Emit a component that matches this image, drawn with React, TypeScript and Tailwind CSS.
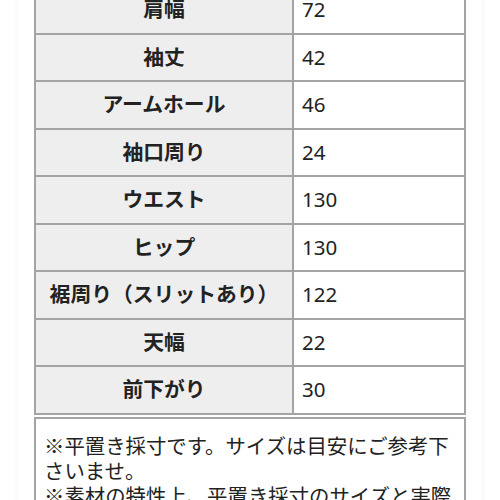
import React from "react";

const rows: [string, string][] = [
  ["肩幅", "72"],
  ["袖丈", "42"],
  ["アームホール", "46"],
  ["袖口周り", "24"],
  ["ウエスト", "130"],
  ["ヒップ", "130"],
  ["裾周り（スリットあり）", "122"],
  ["天幅", "22"],
  ["前下がり", "30"],
];

export default function App() {
  return (
    <div
      className="w-[500px] h-[500px] overflow-hidden bg-white"
      style={{ fontFamily: '"Noto Sans", "Noto Sans CJK JP", sans-serif' }}
    >
      <div className="mx-[18px] h-[540px] bg-white shadow-[0_0_6px_rgba(0,0,0,0.06)] px-[16px] pt-0">
        <div className="mt-[-13px] border-x-2 border-[#a4a4a4] text-[#222]">
          {rows.map(([k, v]) => (
            <div
              key={k}
              className="grid grid-cols-[258px_1fr] h-[47.5px] border-b-2 border-[#a4a4a4]"
            >
              <div className="flex items-center justify-center bg-[#eeeeee] border-r-2 border-[#a4a4a4] font-bold text-[20.8px] whitespace-nowrap">
                {k}
              </div>
              <div className="flex items-center pl-[8px] bg-white text-[20.5px]">
                {v}
              </div>
            </div>
          ))}
        </div>
        <div
          className="mt-[2px] border-2 border-[#a4a4a4] px-[8px] pt-[14px] text-[20.4px] leading-[25px] text-[#222]"
          style={{ fontFamily: '"Noto Sans CJK JP", sans-serif' }}
        >
          ※平置き採寸です。サイズは目安にご参考下さいませ。
          <br />
          ※素材の特性上、平置き採寸のサイズと実際の着用サイズが異なる場合がございます。
        </div>
      </div>
    </div>
  );
}
